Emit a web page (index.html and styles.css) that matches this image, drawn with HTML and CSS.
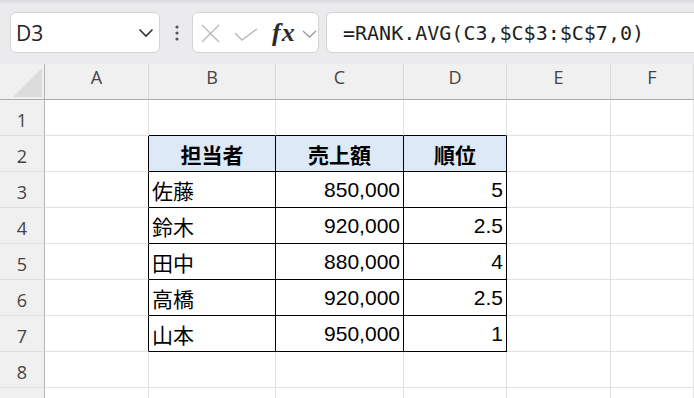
FILE: index.html
```html
<!DOCTYPE html>
<html lang="ja">
<head>
  <meta charset="UTF-8" />
  <title>RANK.AVG</title>
  <link rel="stylesheet" href="styles.css">
</head>
<body>
  <div class="toolbar">
    <div class="namebox">
      <span>D3</span>
      <svg width="16" height="10" viewBox="0 0 16 10"><polyline points="1.5,1.5 8,8 14.5,1.5" fill="none" stroke="#333" stroke-width="1.6"/></svg>
    </div>
    <svg class="more" width="4" height="16" viewBox="0 0 4 16"><circle cx="2" cy="2" r="1.6" fill="#555"/><circle cx="2" cy="8" r="1.6" fill="#555"/><circle cx="2" cy="14" r="1.6" fill="#555"/></svg>
    <div class="fxbox">
      <svg class="cancel" width="19" height="19" viewBox="0 0 19 19"><path d="M1 1L18 18M18 1L1 18" stroke="#b9b9b9" stroke-width="1.4" fill="none"/></svg>
      <svg class="enter" width="24" height="13" viewBox="0 0 24 13"><polyline points="1,5 8,12 23,1" fill="none" stroke="#b9b9b9" stroke-width="1.4"/></svg>
      <span class="fx">fx</span>
      <svg class="drop" width="15" height="8" viewBox="0 0 15 8"><polyline points="1,1 7.5,7 14,1" fill="none" stroke="#999" stroke-width="1.3"/></svg>
    </div>
    <div class="formula">=RANK.AVG(C3,$C$3:$C$7,0)</div>
  </div>

  <div class="sheet">
    <div class="corner"><div class="tri"></div></div>
    <div class="colhead">A</div>
    <div class="colhead">B</div>
    <div class="colhead">C</div>
    <div class="colhead">D</div>
    <div class="colhead">E</div>
    <div class="colhead">F</div>

    <div class="rowhead">1</div>
    <div class="cell"></div>
    <div class="cell top"></div>
    <div class="cell top"></div>
    <div class="cell top"></div>
    <div class="cell"></div>
    <div class="cell"></div>

    <div class="rowhead">2</div>
    <div class="cell side"></div>
    <div class="cell tb th">担当者</div>
    <div class="cell tb th">売上額</div>
    <div class="cell tb th">順位</div>
    <div class="cell"></div>
    <div class="cell"></div>

    <div class="rowhead">3</div>
    <div class="cell side"></div>
    <div class="cell tb name">佐藤</div>
    <div class="cell tb num">850,000</div>
    <div class="cell tb num">5</div>
    <div class="cell"></div>
    <div class="cell"></div>

    <div class="rowhead">4</div>
    <div class="cell side"></div>
    <div class="cell tb name">鈴木</div>
    <div class="cell tb num">920,000</div>
    <div class="cell tb num">2.5</div>
    <div class="cell"></div>
    <div class="cell"></div>

    <div class="rowhead">5</div>
    <div class="cell side"></div>
    <div class="cell tb name">田中</div>
    <div class="cell tb num">880,000</div>
    <div class="cell tb num">4</div>
    <div class="cell"></div>
    <div class="cell"></div>

    <div class="rowhead">6</div>
    <div class="cell side"></div>
    <div class="cell tb name">高橋</div>
    <div class="cell tb num">920,000</div>
    <div class="cell tb num">2.5</div>
    <div class="cell"></div>
    <div class="cell"></div>

    <div class="rowhead">7</div>
    <div class="cell side"></div>
    <div class="cell tb name">山本</div>
    <div class="cell tb num">950,000</div>
    <div class="cell tb num">1</div>
    <div class="cell"></div>
    <div class="cell"></div>

    <div class="rowhead">8</div>
    <div class="cell"></div>
    <div class="cell"></div>
    <div class="cell"></div>
    <div class="cell"></div>
    <div class="cell"></div>
    <div class="cell"></div>

    <div class="rowhead"></div>
    <div class="cell"></div>
    <div class="cell"></div>
    <div class="cell"></div>
    <div class="cell"></div>
    <div class="cell"></div>
    <div class="cell"></div>
  </div>
</body>
</html>
```

FILE: styles.css
```css
body {
  margin: 0;
  width: 694px;
  height: 398px;
  overflow: hidden;
  background: #fff;
  font-family: 'Open Sans', sans-serif;
}
.toolbar {
  height: 64px;
  box-sizing: border-box;
  padding: 12px 0 0 10px;
  display: flex;
  align-items: flex-start;
  background: linear-gradient(#d8d8da, #ebebed 4px);
}
.namebox {
  width: 150px;
  height: 41px;
  box-sizing: border-box;
  background: #fff;
  border: 1px solid #d4d4d4;
  border-radius: 6px;
  display: flex;
  align-items: center;
  justify-content: space-between;
  padding: 0 5px 0 5px;
  font-size: 21px;
  color: #222;
}
.more {
  margin: 13px 0 0 15px;
}
.fxbox {
  width: 127px;
  height: 41px;
  box-sizing: border-box;
  margin-left: 13px;
  background: #fff;
  border: 1px solid #d4d4d4;
  border-radius: 6px;
  display: flex;
  align-items: center;
}
.cancel {
  margin: 2px 0 0 8px;
}
.enter {
  margin: 4px 0 0 14px;
}
.fx {
  margin-left: 14px;
  font-family: 'Liberation Serif', serif;
  font-style: italic;
  font-weight: bold;
  font-size: 26px;
  color: #2b2b2b;
  line-height: 1;
  letter-spacing: 1px;
}
.drop {
  margin: 3px 0 0 6px;
}
.formula {
  flex: 1;
  height: 41px;
  box-sizing: border-box;
  margin: 0 -20px 0 7px;
  background: #fff;
  border: 1px solid #d4d4d4;
  border-radius: 6px;
  display: flex;
  align-items: center;
  padding-left: 16px;
  font-family: 'DejaVu Sans Mono', monospace;
  font-size: 20px;
  color: #1f1f1f;
}
.sheet {
  display: grid;
  grid-template-columns: 45px 104px 127px 128px 103px 104px 1fr;
  grid-auto-rows: 36px;
  height: 334px;
  overflow: hidden;
}
.sheet > div {
  box-sizing: border-box;
  border-right: 1px solid #e1e1e1;
  border-bottom: 1px solid #e1e1e1;
}
.corner {
  background: #f0f0f0;
  display: flex;
  justify-content: flex-end;
  align-items: flex-end;
  padding: 0 2px 2px 0;
}
.sheet > .corner {
  border-right: 1px solid #b4b4b4;
  border-bottom: 1px solid #ababab;
}
.tri {
  width: 29px;
  height: 29px;
  background: #dcdcdc;
  clip-path: polygon(100% 0, 100% 100%, 0 100%);
}
.colhead {
  background: #f0f0f0;
  display: flex;
  justify-content: center;
  padding-top: 1px;
  font-size: 18px;
  color: #444;
}
.sheet > .colhead {
  border-right: 1px solid #d9d9d9;
  border-bottom: 1px solid #ababab;
}
.rowhead {
  background: #f0f0f0;
  display: flex;
  justify-content: center;
  align-items: center;
  padding-top: 4px;
  font-size: 18px;
  color: #444;
}
.sheet > .rowhead {
  border-right: 1px solid #b4b4b4;
  border-bottom: 1px solid #dedede;
}
.cell {
  display: flex;
  align-items: center;
  font-family: 'Liberation Sans', 'Noto Sans CJK JP', sans-serif;
  font-size: 21px;
  color: #000;
}
.sheet > .side {
  border-right: 1px solid #000;
}
.sheet > .top {
  border-bottom: 1px solid #000;
}
.sheet > .tb {
  border-right: 1px solid #000;
  border-bottom: 1px solid #000;
}
.th {
  background: #dde9f7;
  justify-content: center;
  font-weight: bold;
}
.name {
  padding-left: 3px;
}
.num {
  justify-content: flex-end;
  padding-right: 3px;
}
```
